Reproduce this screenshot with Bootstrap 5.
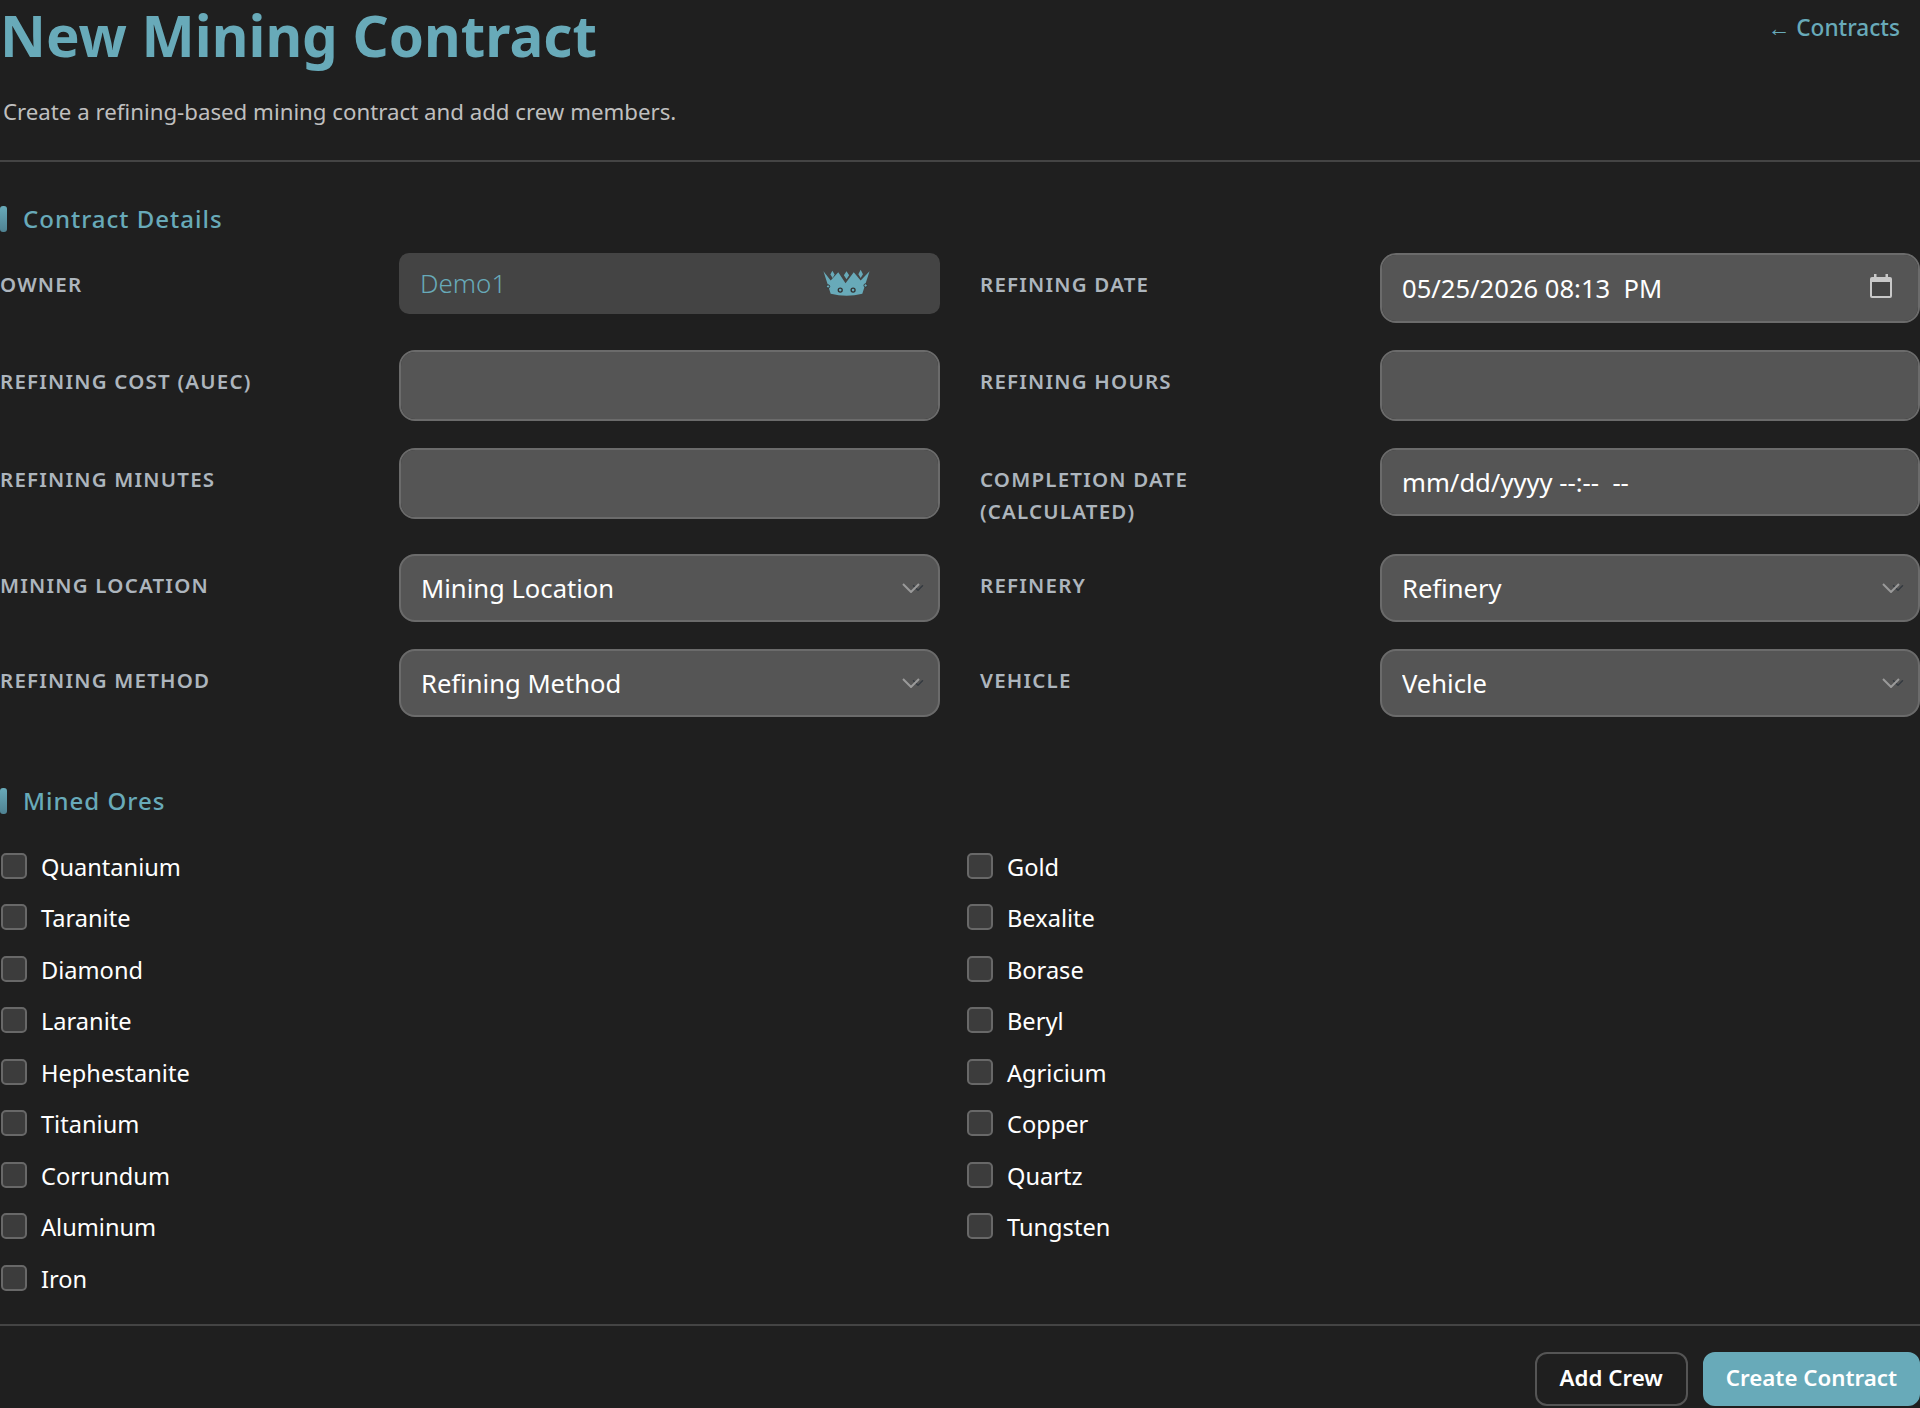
<!DOCTYPE html>
<html lang="en">
  <head>
    <meta charset="UTF-8" />
    <meta name="viewport" content="width=device-width, initial-scale=1.0" />
    <title>New Mining Contract</title>
    <link rel="stylesheet" href="https://cdn.jsdelivr.net/npm/bootstrap@5.3.3/dist/css/bootstrap.min.css" />
    <script src="https://cdn.jsdelivr.net/npm/bootstrap@5.3.3/dist/js/bootstrap.bundle.min.js"></script>
    <style>
      body {
        background: #1f1f1f;
        color: #fff;
        font-family: "Noto Sans", "Open Sans", sans-serif;
      }
      .page-title {
        color: #68aab9;
        font-size: 56.5px;
        font-weight: 700;
        line-height: 72px;
        margin: 0;
      }
      .back-link {
        color: #68aab9;
        font-size: 22.6px;
        font-weight: 500;
        line-height: 56px;
        padding-right: 20px;
        text-decoration: none;
      }
      .page-sub {
        color: #bfbfbf;
        font-size: 22.25px;
        line-height: 32px;
        margin: 24px 0 32px;
        padding-left: 3px;
      }
      .line {
        border-top: 2px solid #444;
        opacity: 1;
        margin: 0;
      }
      .sec-head {
        color: #68aab9;
        font-size: 24px;
        font-weight: 500;
        letter-spacing: 1px;
        line-height: 32px;
        margin: 0;
        padding-left: 23px;
        position: relative;
      }
      .sec-head::before {
        content: "";
        position: absolute;
        left: 0;
        top: 3px;
        width: 7px;
        height: 26px;
        border-radius: 3px;
        background: linear-gradient(#68aab9, #4f8292);
      }
      .sec-details { margin-top: 41px; }
      .sec-ores { margin-top: 68px; }
      .field-grid {
        display: grid;
        grid-template-columns: 399px 541px 440px 540px;
        row-gap: 27px;
        align-items: start;
        margin-top: 18px;
      }
      .field-label {
        color: #adb5bd;
        font-size: 20.5px;
        font-weight: 600;
        letter-spacing: 1.2px;
        line-height: 32px;
        margin: 0;
        padding-top: 15px;
        text-transform: uppercase;
      }
      .right-label { padding-left: 40px; padding-right: 80px; }
      .owner-box {
        background: #444;
        border-radius: 10px;
        color: #68aab9;
        font-size: 26px;
        font-weight: 300;
        height: 61px;
        padding: 0 70px 0 21px;
      }
      .owner-box svg { margin-bottom: 2px; }
      .dark-input, .dark-input:focus {
        background-color: #555;
        border: 2px solid #6b6b6b;
        border-radius: 16px;
        box-shadow: none;
        color: #fff;
        font-size: 25.6px;
        padding: 0 20px;
      }
      .h-date { height: 70px; }
      .h-tall { height: 71px; }
      .h-short { height: 68px; }
      .select-wrap, .date-wrap { position: relative; }
      .select-wrap svg, .date-wrap svg {
        position: absolute;
        pointer-events: none;
      }
      .select-wrap svg { right: 20px; top: 29px; }
      .date-wrap svg { right: 28px; top: 21px; }
      .dark-select { appearance: none; padding-top: 3px; }
      .ore-grid {
        display: grid;
        grid-template-columns: 966px 1fr;
        grid-auto-rows: 51.5px;
        margin-top: 24px;
      }
      .ore-item {
        align-items: center;
        display: flex;
        gap: 14px;
        margin: 0;
        min-height: 0;
        padding: 0;
      }
      .ore-item .form-check-input {
        background-color: #3c3c3c;
        border: 2px solid #686868;
        border-radius: 5px;
        float: none;
        height: 26px;
        margin: 0 0 2px 1px;
        width: 26px;
      }
      .ore-item .form-check-label {
        font-size: 23.6px;
        line-height: 32px;
      }
      .line-foot { margin-top: 19px; }
      .foot-bar { gap: 15px; margin-top: 26px; }
      .btn-crew, .btn-create {
        align-items: center;
        border-radius: 12px;
        display: flex;
        font-size: 22.3px;
        font-weight: 600;
        height: 54px;
        line-height: 1;
      }
      .btn-crew { border: 2px solid #555; color: #fff; padding: 0 23px; }
      .btn-create { background: #68aab9; border: 2px solid #68aab9; color: #fff; padding: 0 21px; }
    </style>
  </head>
  <body>
    <header>
      <div class="d-flex justify-content-between align-items-start">
        <h1 class="page-title">New Mining Contract</h1>
        <a class="back-link" href="#">← Contracts</a>
      </div>
      <p class="page-sub">Create a refining-based mining contract and add crew members.</p>
      <hr class="line" />
    </header>

    <form>
      <h2 class="sec-head sec-details">Contract Details</h2>

      <div class="field-grid">
        <label class="field-label">Owner</label>
        <div class="owner-box d-flex align-items-center justify-content-between">
          <span>Demo1</span>
          <svg width="47" height="28" viewBox="130 85 140 85" aria-hidden="true">
            <path fill="#68aab9" d="M130 92 152 120 175 95 197 128 222 95 243 120 270 92 256 135 248 160Q200 172 152 160L144 135Z" />
            <path fill="#68aab9" d="M157 90 164 102 158 112 151 102ZM200 92 208 104 200 116 192 104ZM243 87 250 101 243 112 236 101Z" />
            <circle cx="181" cy="149" r="6" fill="#68aab9" stroke="#333" stroke-width="4" />
            <circle cx="220" cy="149" r="6" fill="#68aab9" stroke="#333" stroke-width="4" />
            <circle cx="144" cy="138" r="5" fill="#68aab9" stroke="#333" stroke-width="3" />
            <circle cx="258" cy="135" r="5" fill="#68aab9" stroke="#333" stroke-width="3" />
          </svg>
        </div>
        <label class="field-label right-label">Refining Date</label>
        <div class="date-wrap">
          <input class="form-control dark-input h-date" type="text" value="05/25/2026 08:13  PM" />
          <svg width="22" height="24" viewBox="0 0 22 24" aria-hidden="true">
            <path fill="#c8c8c8" d="M4 0h2.500v3h9V0H18v3h2a2 2 0 0 1 2 2v17a2 2 0 0 1-2 2H2a2 2 0 0 1-2-2V5a2 2 0 0 1 2-2h2Z" />
            <rect x="2" y="8" width="18" height="14" fill="#444" />
          </svg>
        </div>

        <label class="field-label">Refining Cost (aUEC)</label>
        <input class="form-control dark-input h-tall" type="text" />
        <label class="field-label right-label">Refining Hours</label>
        <input class="form-control dark-input h-tall" type="text" />

        <label class="field-label">Refining Minutes</label>
        <input class="form-control dark-input h-tall" type="text" />
        <label class="field-label right-label">Completion Date (Calculated)</label>
        <input class="form-control dark-input h-short" type="text" value="mm/dd/yyyy --:--  --" />

        <label class="field-label">Mining Location</label>
        <div class="select-wrap">
          <select class="form-select dark-input dark-select h-short"><option>Mining Location</option></select>
          <svg width="18" height="10" viewBox="0 0 18 10" aria-hidden="true"><path d="M1 1l8 8 8-8" fill="none" stroke="#9a9a9a" stroke-width="2" /></svg>
        </div>
        <label class="field-label right-label">Refinery</label>
        <div class="select-wrap">
          <select class="form-select dark-input dark-select h-short"><option>Refinery</option></select>
          <svg width="18" height="10" viewBox="0 0 18 10" aria-hidden="true"><path d="M1 1l8 8 8-8" fill="none" stroke="#9a9a9a" stroke-width="2" /></svg>
        </div>

        <label class="field-label">Refining Method</label>
        <div class="select-wrap">
          <select class="form-select dark-input dark-select h-short"><option>Refining Method</option></select>
          <svg width="18" height="10" viewBox="0 0 18 10" aria-hidden="true"><path d="M1 1l8 8 8-8" fill="none" stroke="#9a9a9a" stroke-width="2" /></svg>
        </div>
        <label class="field-label right-label">Vehicle</label>
        <div class="select-wrap">
          <select class="form-select dark-input dark-select h-short"><option>Vehicle</option></select>
          <svg width="18" height="10" viewBox="0 0 18 10" aria-hidden="true"><path d="M1 1l8 8 8-8" fill="none" stroke="#9a9a9a" stroke-width="2" /></svg>
        </div>
      </div>

      <h2 class="sec-head sec-ores">Mined Ores</h2>

      <div class="ore-grid" id="oreGrid"></div>

      <hr class="line line-foot" />

      <div class="d-flex justify-content-end foot-bar">
        <button class="btn btn-crew" type="button">Add Crew</button>
        <button class="btn btn-create" type="button">Create Contract</button>
      </div>
    </form>

    <script>
      const ores = [
        ["Quantanium", "Gold"],
        ["Taranite", "Bexalite"],
        ["Diamond", "Borase"],
        ["Laranite", "Beryl"],
        ["Hephestanite", "Agricium"],
        ["Titanium", "Copper"],
        ["Corrundum", "Quartz"],
        ["Aluminum", "Tungsten"],
        ["Iron", ""],
      ];
      const oreGrid = document.querySelector("#oreGrid");
      let html = "";
      for (let i = 0; i < ores.length; i++) {
        for (let j = 0; j < 2; j++) {
          const name = ores[i][j];
          if (name === "") continue;
          html += `<div class="form-check ore-item"><input class="form-check-input" type="checkbox" id="ore-${name}" /><label class="form-check-label" for="ore-${name}">${name}</label></div>`;
        }
      }
      oreGrid.innerHTML = html;
    </script>
  </body>
</html>
